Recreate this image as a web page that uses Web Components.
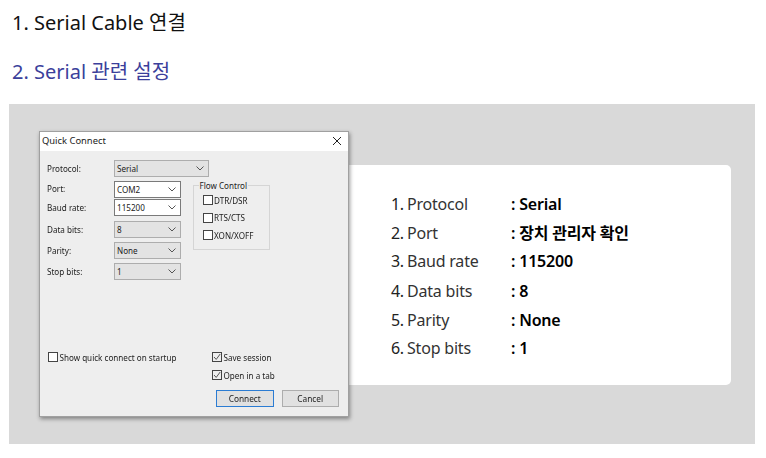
<!DOCTYPE html>
<html lang="ko">
<head>
<meta charset="utf-8">
<title>Serial</title>
<style>
  html, body { margin: 0; background: #fff; }
  body { width: 766px; height: 458px; overflow: hidden; font-family: "Noto Sans", "Noto Sans CJK KR", sans-serif; }
</style>
</head>
<body>
<guide-page>
  <guide-heading>1. Serial Cable 연결</guide-heading>
  <guide-heading active>2. Serial 관련 설정</guide-heading>
  <guide-panel>
    <quick-connect slot="dialog"></quick-connect>
    <setting-card slot="card">
      <setting-row num="1." name="Protocol">: Serial</setting-row>
      <setting-row num="2." name="Port">: 장치 관리자 확인</setting-row>
      <setting-row num="3." name="Baud rate">: 115200</setting-row>
      <setting-row num="4." name="Data bits" style="margin-top:1px">: 8</setting-row>
      <setting-row num="5." name="Parity">: None</setting-row>
      <setting-row num="6." name="Stop bits">: 1</setting-row>
    </setting-card>
  </guide-panel>
</guide-page>

<script>
function define(name, html) {
  customElements.define(name, class extends HTMLElement {
    constructor() {
      super()
      const root = this.attachShadow({mode: 'open'})
      root.innerHTML = typeof html === 'function' ? html(this) : html
    }
  })
}

define('guide-page', `
  <style>
    :host { display: block; padding: 10px 11px 0 9px; }
  </style>
  <slot></slot>
`)

define('guide-heading', `
  <style>
    :host {
      display: block;
      padding-left: 3px;
      height: 49px;
      line-height: 25px;
      font-size: 20px;
      color: #111;
      font-family: "Noto Sans", "Noto Sans CJK KR", sans-serif;
    }
    :host([active]) { color: #3b3f9b; height: 45px; }
  </style>
  <slot></slot>
`)

define('guide-panel', `
  <style>
    :host {
      display: flex;
      align-items: flex-start;
      box-sizing: border-box;
      width: 746px;
      height: 340px;
      background: #d9d9d9;
      padding: 27px 0 0 30px;
    }
    .card { margin-top: 34px; }
  </style>
  <slot name="dialog"></slot>
  <div class="card"><slot name="card"></slot></div>
`)

define('setting-card', `
  <style>
    :host {
      display: flex;
      flex-direction: column;
      box-sizing: border-box;
      width: 382px;
      height: 220px;
      padding: 25px 0 0 42px;
      background: #fff;
      border-radius: 0 5px 5px 0;
    }
  </style>
  <slot></slot>
`)

define('setting-row', el => `
  <style>
    :host {
      display: flex;
      height: 28.7px;
      line-height: 29px;
      font-size: 16px;
      font-family: "Noto Sans", "Noto Sans CJK KR", sans-serif;
      color: #222;
    }
    .num { width: 16px; letter-spacing: -0.4px; }
    .name { width: 104px; color: #333; letter-spacing: -0.2px; }
    .val { font-weight: 600; color: #000; letter-spacing: -0.2px; }
  </style>
  <span class="num">${el.getAttribute('num')}</span>
  <span class="name">${el.getAttribute('name')}</span>
  <span class="val"><slot></slot></span>
`)

define('qc-select', `
  <style>
    :host {
      display: flex;
      align-items: center;
      box-sizing: border-box;
      width: 67px;
      height: 17px;
      padding-left: 2px;
      border: 1px solid #adadad;
      background: #e3e3e3;
      color: #222;
      font-size: 8.1px;
    }
    :host([editable]) { background: #fff; border-color: #7a7a7a; }
    span { flex: 1; }
    svg { width: 8px; height: 5px; margin-right: 4px; }
  </style>
  <span><slot></slot></span>
  <svg viewBox="0 0 8 5" fill="none" stroke="#555" stroke-width="1"><path d="M.5.5 4 4 7.5.5"/></svg>
`)

define('qc-check', el => `
  <style>
    :host {
      display: flex;
      align-items: center;
      gap: 1.5px;
      height: 12px;
      font-size: 8.1px;
      color: #222;
      white-space: nowrap;
    }
    svg { width: 10px; height: 10px; flex: none; }
  </style>
  <svg viewBox="0 0 10 10" fill="#fff" stroke="#444" stroke-width="1">
    <rect x=".5" y=".5" width="9" height="9" ${el.hasAttribute('checked') ? 'fill="none"' : ''}/>
    ${el.hasAttribute('checked') ? '<path d="M2 5 4.2 7.4 8.2 2" fill="none" stroke-width=".9"/>' : ''}
  </svg>
  <slot></slot>
`)

define('qc-button', `
  <style>
    :host {
      display: flex;
      align-items: center;
      justify-content: center;
      box-sizing: border-box;
      width: 58px;
      height: 17px;
      background: #e1e1e1;
      border: 1px solid #adadad;
      font-size: 8.3px;
      color: #222;
    }
    :host([primary]) { border: 1.5px solid #2b7cd3; }
  </style>
  <slot></slot>
`)

define('quick-connect', `
  <style>
    :host {
      display: block;
      position: relative;
      z-index: 1;
      flex: none;
      box-sizing: border-box;
      width: 310px;
      height: 286px;
      border: 1px solid #a0a0a0;
      background: #eeeeee;
      box-shadow: 1px 2px 4px rgba(0,0,0,.4);
      font-family: "Noto Sans", sans-serif;
      color: #222;
      filter: blur(.3px);
    }
    .title {
      display: flex;
      align-items: center;
      justify-content: space-between;
      height: 19px;
      padding: 0 6px 2px 2px;
      box-sizing: border-box;
      background: #fff;
      font-size: 9.4px;
    }
    .title svg { width: 10px; height: 10px; }
    .body {
      display: flex;
      flex-direction: column;
      height: 265px;
      box-sizing: border-box;
      padding: 9px 9px 9px 7px;
      font-size: 8.1px;
    }
    .top { display: flex; height: 193px; }
    .fields { display: grid; grid-template-columns: 67px 67px; align-content: start; align-items: center; row-gap: 0; }
    .fields > span { position: relative; top: -.5px; }
    .g1 { margin-top: 3.5px; }
    .g2 { margin-top: 1.5px; }
    .g3 { margin-top: 5px; }
    .g4 { margin-top: 4px; }
    .wide { width: 95px; }
    .flow {
      position: relative;
      box-sizing: border-box;
      align-self: flex-start;
      width: 77px;
      height: 65px;
      margin: 25px 0 0 12px;
      padding: 8px 0 0 8.5px;
      border: 1px solid #d5d5d5;
      display: flex;
      flex-direction: column;
      gap: 5.5px;
    }
    .legend {
      position: absolute;
      top: -6px;
      left: 4.5px;
      padding: 0 1px;
      background: #eee;
      line-height: 11px;
    }
    .options { display: flex; padding-left: 1px; }
    .options .left { width: 164px; flex: none; }
    .options .right { display: flex; flex-direction: column; gap: 6px; }
    .buttons { display: flex; gap: 8px; margin: 9px 0 0 169px; }
  </style>
  <div class="title">
    <span>Quick Connect</span>
    <svg viewBox="0 0 10 10" fill="none" stroke="#222" stroke-width="1"><path d="M1 1l8 8M9 1 1 9"/></svg>
  </div>
  <div class="body">
    <div class="top">
      <div class="fields">
        <span>Protocol:</span><qc-select class="wide">Serial</qc-select>
        <span class="g1">Port:</span><qc-select class="g1" editable>COM2</qc-select>
        <span class="g2">Baud rate:</span><qc-select class="g2" editable>115200</qc-select>
        <span class="g3">Data bits:</span><qc-select class="g3">8</qc-select>
        <span class="g4">Parity:</span><qc-select class="g4">None</qc-select>
        <span class="g4">Stop bits:</span><qc-select class="g4">1</qc-select>
      </div>
      <div class="flow">
        <span class="legend">Flow Control</span>
        <qc-check>DTR/DSR</qc-check>
        <qc-check>RTS/CTS</qc-check>
        <qc-check>XON/XOFF</qc-check>
      </div>
    </div>
    <div class="options">
      <qc-check class="left">Show quick connect on startup</qc-check>
      <div class="right">
        <qc-check checked>Save session</qc-check>
        <qc-check checked>Open in a tab</qc-check>
      </div>
    </div>
    <div class="buttons">
      <qc-button primary>Connect</qc-button>
      <qc-button>Cancel</qc-button>
    </div>
  </div>
`)
</script>
</body>
</html>
